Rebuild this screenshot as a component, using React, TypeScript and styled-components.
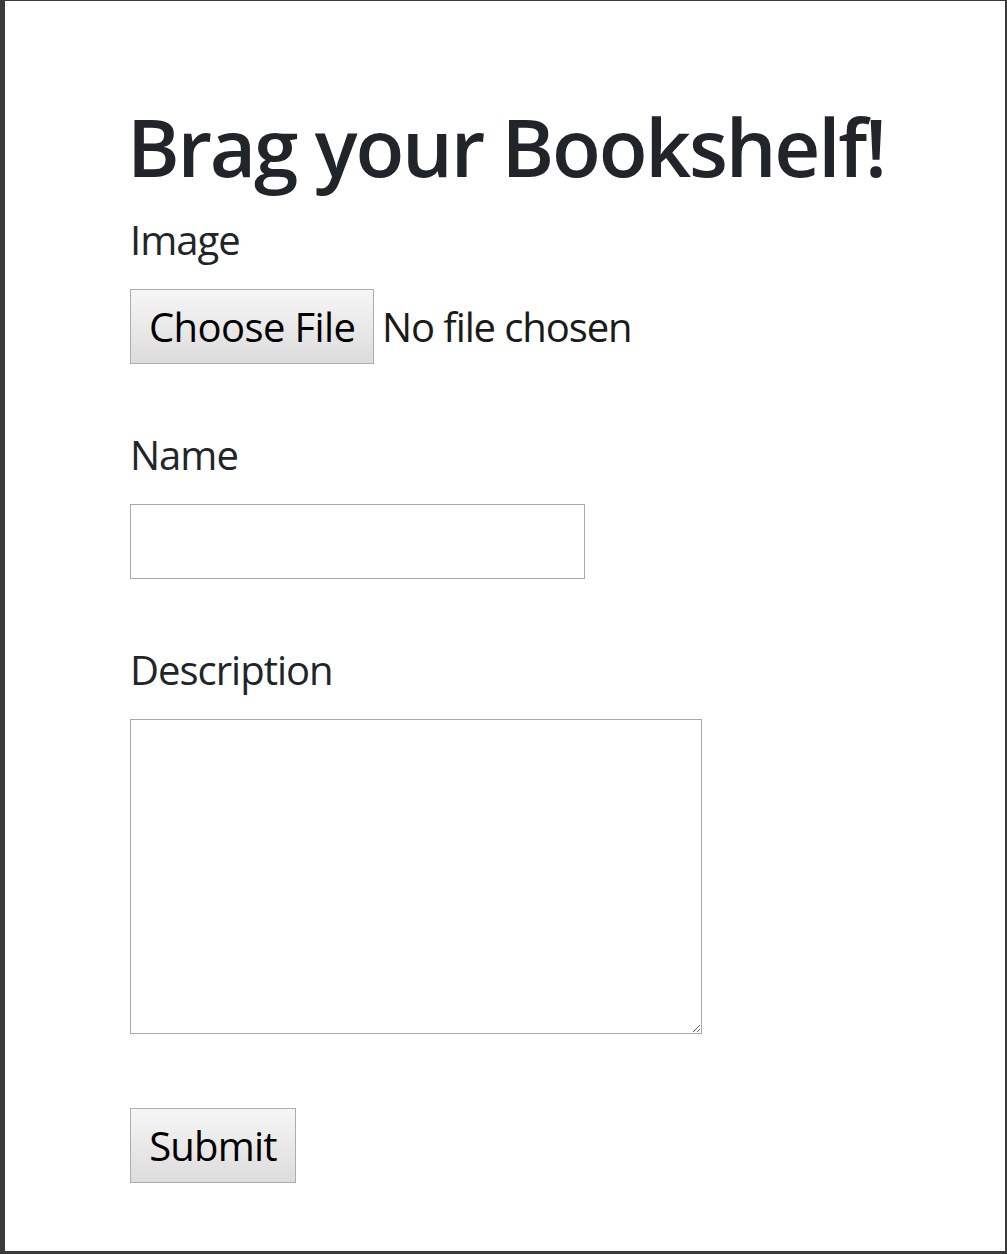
import React from "react";
import styled, { createGlobalStyle } from "styled-components";

const GlobalStyle = createGlobalStyle`
  html, body {
    margin: 0;
    padding: 0;
    background: #ffffff;
  }
  body {
    font-family: "Open Sans", "Noto Sans", sans-serif;
    color: #212529;
  }
`;

const Frame = styled.div`
  box-sizing: border-box;
  width: 1007px;
  height: 1254px;
  border-style: solid;
  border-color: #3a3a3a;
  border-width: 1px 2px 3px 5px;
  background: #ffffff;
  overflow: hidden;
`;

const Container = styled.main`
  padding: 97px 0 0 125px;
`;

const Heading = styled.h1`
  margin: 0 0 16px -3px;
  font-size: 80px;
  font-weight: 600;
  line-height: 96px;
  letter-spacing: -2.2px;
  color: #212529;
`;

const Form = styled.form`
  display: flex;
  flex-direction: column;
  align-items: flex-start;
`;

const Group = styled.div`
  display: flex;
  flex-direction: column;
  align-items: flex-start;
  margin-bottom: 61px;
`;

const Label = styled.label`
  display: block;
  margin: 0 0 19px;
  font-size: 40px;
  line-height: 60px;
  letter-spacing: -1px;
  color: #212529;
`;

const FileInput = styled.input`
  font-family: inherit;
  font-size: 40px;
  letter-spacing: -1.1px;
  color: #1a1a1a;
  line-height: 1;

  &::file-selector-button {
    box-sizing: border-box;
    width: 244px;
    height: 75px;
    margin: 0 8px 0 0;
    padding: 0 18px;
    font-family: inherit;
    font-size: 40px;
    letter-spacing: -0.6px;
    color: #000000;
    border: 1px solid #adadad;
    border-radius: 0;
    background: linear-gradient(#f6f6f6, #dcdcdc);
  }
`;

const TextInput = styled.input`
  box-sizing: border-box;
  width: 455px;
  height: 75px;
  padding: 0 12px;
  font-family: inherit;
  font-size: 40px;
  border: 1px solid #a9a9a9;
  border-radius: 0;
  outline: none;
`;

const TextArea = styled.textarea`
  box-sizing: border-box;
  display: block;
  width: 572px;
  height: 315px;
  padding: 8px 12px;
  font-family: inherit;
  font-size: 40px;
  border: 1px solid #a9a9a9;
  border-radius: 0;
  outline: none;
`;

const SubmitButton = styled.button`
  box-sizing: border-box;
  width: 166px;
  height: 75px;
  margin-top: 13px;
  padding: 0;
  font-family: inherit;
  font-size: 40px;
  letter-spacing: -0.8px;
  color: #000000;
  border: 1px solid #adadad;
  border-radius: 0;
  background: linear-gradient(#f6f6f6, #dcdcdc);
`;

export default function App() {
  return (
    <>
      <GlobalStyle />
      <Frame>
        <Container>
          <Heading>Brag your Bookshelf!</Heading>
          <Form onSubmit={(e) => e.preventDefault()}>
            <Group>
              <Label htmlFor="image">Image</Label>
              <FileInput id="image" type="file" />
            </Group>
            <Group>
              <Label htmlFor="name">Name</Label>
              <TextInput id="name" type="text" />
            </Group>
            <Group>
              <Label htmlFor="description">Description</Label>
              <TextArea id="description" />
            </Group>
            <SubmitButton type="submit">Submit</SubmitButton>
          </Form>
        </Container>
      </Frame>
    </>
  );
}
